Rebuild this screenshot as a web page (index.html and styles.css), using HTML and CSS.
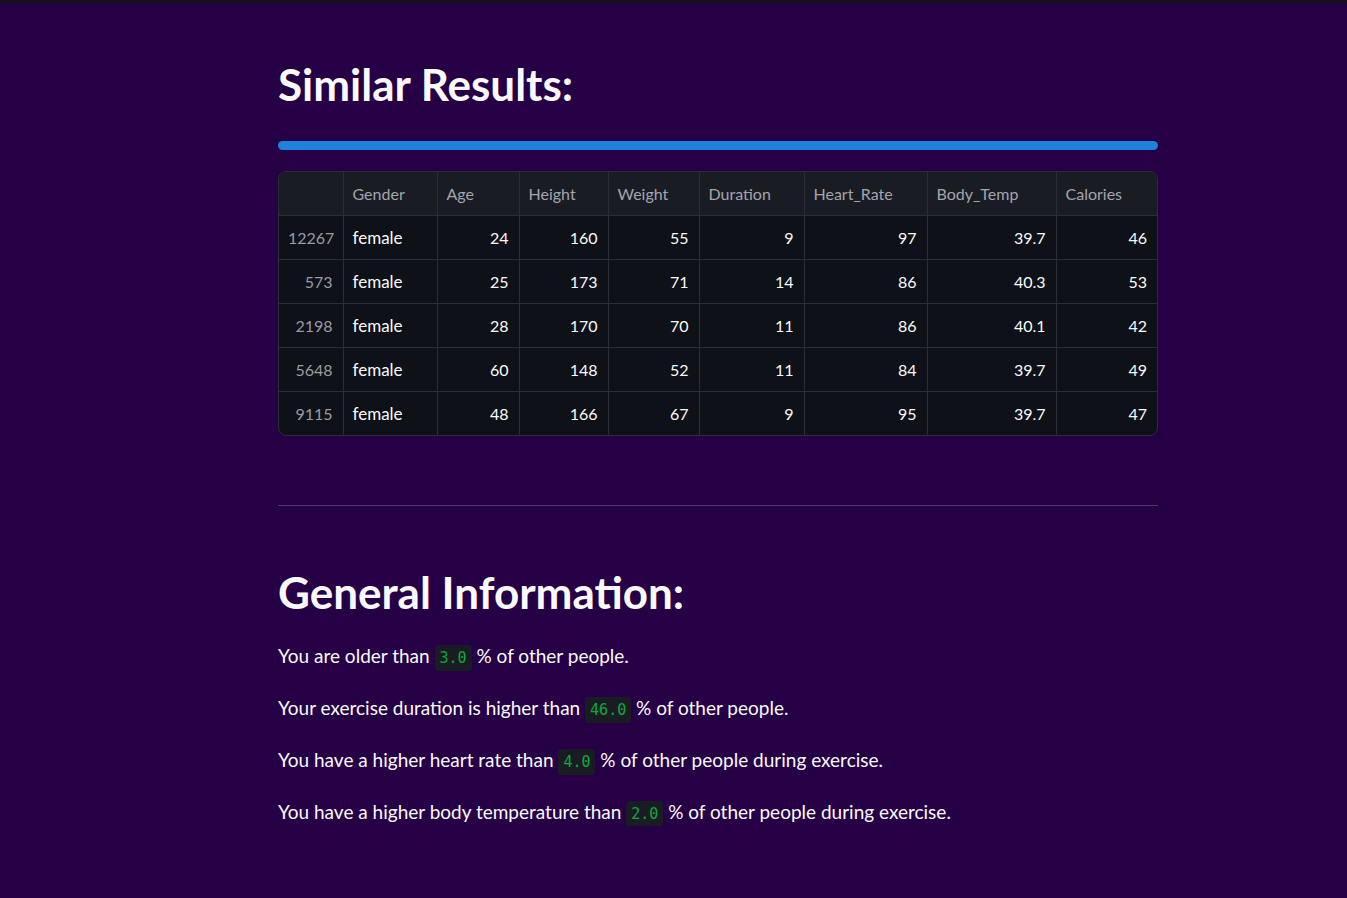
FILE: index.html
```html
<!DOCTYPE html>
<html>
<head>
<meta charset="utf-8">
<link rel="stylesheet" href="styles.css">
</head>
<body>
<div class="topbar"></div>
<main class="main">
  <h1 class="title">Similar Results:</h1>
  <div class="progress"><div class="progress-fill"></div></div>
  <div class="table-wrap">
    <table class="df">
      <colgroup>
        <col style="width:64px"><col style="width:94px"><col style="width:82px"><col style="width:89px"><col style="width:91px"><col style="width:105px"><col style="width:123px"><col style="width:129px"><col style="width:101px">
      </colgroup>
      <thead>
        <tr><th></th><th>Gender</th><th>Age</th><th>Height</th><th>Weight</th><th>Duration</th><th>Heart_Rate</th><th>Body_Temp</th><th>Calories</th></tr>
      </thead>
      <tbody>
        <tr><td class="idx">12267</td><td class="txt">female</td><td>24</td><td>160</td><td>55</td><td>9</td><td>97</td><td>39.7</td><td>46</td></tr>
        <tr><td class="idx">573</td><td class="txt">female</td><td>25</td><td>173</td><td>71</td><td>14</td><td>86</td><td>40.3</td><td>53</td></tr>
        <tr><td class="idx">2198</td><td class="txt">female</td><td>28</td><td>170</td><td>70</td><td>11</td><td>86</td><td>40.1</td><td>42</td></tr>
        <tr><td class="idx">5648</td><td class="txt">female</td><td>60</td><td>148</td><td>52</td><td>11</td><td>84</td><td>39.7</td><td>49</td></tr>
        <tr><td class="idx">9115</td><td class="txt">female</td><td>48</td><td>166</td><td>67</td><td>9</td><td>95</td><td>39.7</td><td>47</td></tr>
      </tbody>
    </table>
  </div>
  <hr class="divider">
  <h1 class="title title-2">General Information:</h1>
  <p class="line">You are older than <code>3.0</code> % of other people.</p>
  <p class="line">Your exercise duration is higher than <code>46.0</code> % of other people.</p>
  <p class="line">You have a higher heart rate than <code>4.0</code> % of other people during exercise.</p>
  <p class="line">You have a higher body temperature than <code>2.0</code> % of other people during exercise.</p>
</main>
</body>
</html>
```
FILE: styles.css
```css
html, body {
  margin: 0;
  padding: 0;
  background: #260046;
  color: #fafafa;
  font-family: "Source Sans Pro", Lato, "Noto Sans", sans-serif;
}
.topbar {
  height: 3px;
  background: #14131a;
}
.main {
  width: 880px;
  margin-left: 278px;
  padding-top: 55px;
}
.title {
  margin: 0;
  font-size: 44px;
  font-weight: 700;
  line-height: 52px;
}
.progress {
  margin-top: 31px;
  height: 9px;
  border-radius: 5px;
  background: #1f82dd;
}
.progress-fill {
  height: 100%;
}
.table-wrap {
  margin-top: 21px;
  border: 1px solid #2c2e36;
  border-radius: 8px;
  overflow: hidden;
  background: #0e1117;
}
.df {
  width: 100%;
  border-collapse: collapse;
  table-layout: fixed;
  font-size: 16px;
}
.df th, .df td {
  height: 43px;
  padding: 0 10px 0 9px;
  border-right: 1px solid #2c2e36;
  border-bottom: 1px solid #2c2e36;
  white-space: nowrap;
}
.df th:last-child, .df td:last-child { border-right: none; }
.df tbody tr:last-child td { border-bottom: none; }
.df th {
  background: #1a1c24;
  color: #a3a5ab;
  font-weight: 400;
  text-align: left;
}
.df td {
  text-align: right;
  color: #fafafa;
}
.df td.txt { text-align: left; font-size: 17px; }
.df td.idx { color: #9a9ca2; }
.divider {
  margin: 69px 0 0;
  border: none;
  height: 1px;
  background: #4d3a63;
}
.title-2 {
  margin-top: 60px;
}
.line {
  margin: 24px 0 0;
  font-size: 19px;
  line-height: 28px;
}
code {
  font-family: "DejaVu Sans Mono", "Liberation Mono", monospace;
  font-size: 15px;
  line-height: 16px;
  color: #09ab3b;
  background: #1a1c24;
  border-radius: 4px;
  padding: 4px 5px;
}
```
